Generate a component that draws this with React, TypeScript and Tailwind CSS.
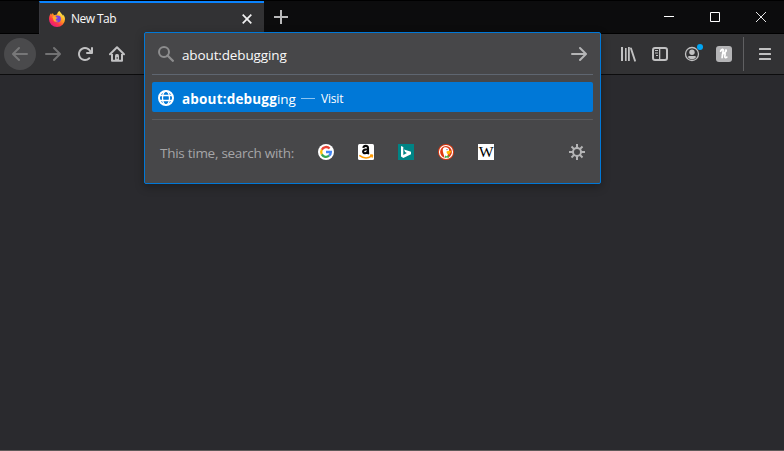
import React from "react";

const ui = "font-['Open_Sans','Noto_Sans',sans-serif]";

function Icon({ children, className = "" }: { children: React.ReactNode; className?: string }) {
  return (
    <svg viewBox="0 0 16 16" className={`block size-4 shrink-0 ${className}`} fill="currentColor">
      {children}
    </svg>
  );
}

const BACK =
  "M15 7H3.414l4.293-4.293a1 1 0 0 0-1.414-1.414l-6 6a1 1 0 0 0 0 1.414l6 6a1 1 0 0 0 1.414-1.414L3.414 9H15a1 1 0 0 0 0-2z";

function Firefox() {
  return (
    <Icon>
      <defs>
        <linearGradient id="fx" x1="0.85" y1="0.1" x2="0.2" y2="0.95">
          <stop offset="0" stopColor="#fff44f" />
          <stop offset="0.4" stopColor="#ff9a1f" />
          <stop offset="0.7" stopColor="#ff3647" />
          <stop offset="1" stopColor="#e31587" />
        </linearGradient>
      </defs>
      <path
        fill="url(#fx)"
        d="M15.4 5.4c-.4-.9-1.100-1.700-1.700-2 .5 1 .7 1.700.8 2.200C13.600 3.300 12 2.400 10.800.4L10.400 0C8.700 1 8.200 2.700 8 3.600c-.8 0-1.500.2-2.100.5-1 .1-1.700-.5-1.900-2.100-.6.3-1 .9-1.300 1.500-.4-.1-.6-.9-.5-1.600C.8 3.200 0 5.500 0 8.200a8 7.800 0 0 0 16 0c0-1-.2-2-.6-2.800z"
      />
      <circle cx="8.500" cy="7.900" r="3.400" fill="#7542e5" />
      <path fill="#ffab2e" d="M3.300 6.100c.9-1.300 2.300-1.500 3.500-.8-.2.900.5 1.400 1.900 1.400-.1.900-1.600.8-1.900 1.500-.1 1.200 1 2 2.400 1.500-1 1.700-3.900 1.200-4.700-.5-.5-1.200-.2-2.200-1.200-3.100z" />
    </Icon>
  );
}

function TabStrip() {
  return (
    <header className="flex h-[34px] border-t border-black bg-[#0c0c0d]">
      <div className="w-[39px] border-b border-black" />
      <div className="flex w-[225px] items-center border-t-2 border-l border-t-[#0a84ff] border-l-[#38383d] bg-[#323234] pl-[9px]">
        <Firefox />
        <span className="ml-[6px] pt-px text-[12px] leading-4 tracking-[-0.55px] text-[#f9f9fa]">New Tab</span>
        <svg viewBox="0 0 10 10" className="mr-[12px] ml-auto size-[10px]" stroke="#f1f1f2" strokeWidth="1.7">
          <path d="M.7.7l8.600 8.600M9.300.7L.7 9.300" />
        </svg>
      </div>
      <div className="flex flex-1 items-center border-b border-black">
        <svg viewBox="0 0 14 14" className="ml-[10px] size-[14px]" stroke="#b9b9ba" strokeWidth="2">
          <path d="M7 0v14M0 7h14" />
        </svg>
        <div className="mr-[18px] ml-auto flex gap-9">
          <svg viewBox="0 0 10 10" className="size-[10px]" stroke="#fff" fill="none">
            <path d="M0 4.500h10" />
          </svg>
          <svg viewBox="0 0 10 10" className="size-[10px]" stroke="#fff" fill="none">
            <path d="M.5.5h9v9h-9z" />
          </svg>
          <svg viewBox="0 0 10 10" className="size-[10px]" stroke="#fff" fill="none" strokeWidth="0.9">
            <path d="M0 0l10 10M10 0L0 10" />
          </svg>
        </div>
      </div>
    </header>
  );
}

function Toolbar() {
  return (
    <nav className="flex h-[41px] items-center border-b border-[#0c0c0d] bg-[#323234] pl-1 text-[#c1c1c2]">
      <div className="flex size-8 items-center justify-center rounded-full bg-[#4a4a4c] text-[#777778]">
        <Icon><path d={BACK} /></Icon>
      </div>
      <Icon className="ml-[9px] -scale-x-100 text-[#727273]"><path d={BACK} /></Icon>
      <Icon className="ml-4">
        <path d="M15 1a1 1 0 0 0-1 1v2.418A6.995 6.995 0 1 0 8 15a6.954 6.954 0 0 0 4.950-2.050 1 1 0 0 0-1.414-1.414A5.019 5.019 0 1 1 12.549 6H10a1 1 0 0 0 0 2h5a1 1 0 0 0 1-1V2a1 1 0 0 0-1-1z" />
      </Icon>
      <Icon className="ml-4">
        <path d="M1 8.200L8 1.300l7 6.900" fill="none" stroke="currentColor" strokeWidth="2" strokeLinecap="round" strokeLinejoin="round" />
        <path d="M3 8v6.800h10V8" fill="none" stroke="currentColor" strokeWidth="2" strokeLinejoin="round" />
        <path d="M6 9.500A1.500 1.500 0 0 1 7.500 8h1A1.500 1.500 0 0 1 10 9.500V15H6z" />
        <path d="M7.700 11h.9v2h-.9z" fill="#323234" />
      </Icon>
      <div className="ml-auto flex items-center">
        <Icon>
          <path d="M1 1h2v14H1zM5 2h1.600v13H5zM8 1h1.800v14H8z" />
          <path d="M11 2.500L15 14.700" stroke="currentColor" strokeWidth="1.900" strokeLinecap="round" />
        </Icon>
        <Icon className="ml-4">
          <rect x="1" y="2" width="14" height="12" rx="2" fill="none" stroke="currentColor" strokeWidth="2" />
          <path d="M7 2h1.300v12H7zM3 4h3v1H3zM3 6.500h3v1H3zM4 9h2v1H4z" />
        </Icon>
        <div className="relative ml-4">
          <Icon>
            <circle cx="8" cy="8" r="6.500" fill="none" stroke="currentColor" strokeWidth="1.300" />
            <circle cx="8" cy="6.300" r="2.700" />
            <path d="M3.700 11c1-1.600 2.300-1 4.300-1s3.300-.6 4.300 1A5.300 5.300 0 0 1 3.700 11z" />
          </Icon>
          <span className="absolute -top-[2px] left-[13px] size-[6px] rounded-full bg-[#00a6f5]" />
        </div>
        <Icon className="ml-4">
          <rect width="16" height="16" rx="3" fill="#b4b4b6" />
          <path d="M4.600 5.200C5.600 3.200 7.500 2.700 7.200 4.400L6.100 11.600M6.400 8.600c1.200-1.700 2.900-1.700 2.700-.4l-.3 2.300c-.1 1.300 1.200 1.400 2 .6" fill="none" stroke="#fff" strokeWidth="1.700" strokeLinecap="round" />
          <path d="M7.300 6.500c1.800.1 3.500-.9 3.200-2.200-.3-.9-1.400-.5-1.300.7l.2 2" fill="none" stroke="#fff" strokeWidth="1.100" strokeLinecap="round" />
        </Icon>
        <div className="ml-[11px] h-[34px] w-px bg-[#606062]" />
        <Icon className="mr-[11px] ml-[13px]">
          <rect x="2" y="2" width="12" height="2" rx=".5" />
          <rect x="2" y="7" width="12" height="2" rx=".5" />
          <rect x="2" y="12" width="12" height="2" rx=".5" />
        </Icon>
      </div>
    </nav>
  );
}

function Engines() {
  return (
    <div className="flex gap-6">
      <Icon>
        <circle cx="8" cy="8" r="8" fill="#fff" />
        <g fill="none" strokeWidth="2.300">
          <path d="M11.600 4.500A4.800 4.800 0 0 0 3.800 5.700" stroke="#ea4335" />
          <path d="M3.800 5.700a4.800 4.800 0 0 0 0 4.700" stroke="#fbbc05" />
          <path d="M3.800 10.400a4.800 4.800 0 0 0 7.300 1.300" stroke="#34a853" />
          <path d="M8 8h4.900a4.800 4.800 0 0 1-1.800 3.700" stroke="#4285f4" />
        </g>
      </Icon>
      <Icon>
        <rect width="16" height="16" rx="1.500" fill="#fff" />
        <path d="M5.300 3.900C5.700 1.300 10 1.100 10 4v4.400c0 .8.4 1.100.9 1.500M9.500 5.200C7 5.200 5.100 5.800 5.100 7.600c0 2.400 3.700 2.100 4.500-.3" fill="none" stroke="#050505" strokeWidth="2.100" />
        <path d="M1.300 11.300c3.900 3 8.500 3.300 12.100.8M12 11.300c1.200-.3 2.500-.3 2.500 0s-.1 1.300-.7 2.200" fill="none" stroke="#f90" strokeWidth="1.500" />
      </Icon>
      <Icon>
        <rect width="16" height="16" fill="#008485" />
        <path d="M3 2l2.300.9v8l3.600-2-1.800-.9-1.100-2.600 7 2.400v2.400L5.300 14 3 12.600z" fill="#fff" />
      </Icon>
      <Icon>
        <circle cx="8" cy="8" r="8" fill="#de3910" />
        <circle cx="8" cy="8" r="6.500" fill="none" stroke="#fff" strokeWidth="1.200" />
        <path d="M6.600 13.800C6 10.500 4.300 7.500 4.800 5.200c.4-1.500 1.700-2.100 3.200-1.900 2.400.2 3.400 1.800 3.100 4.300l-1.600 3.700.4 2.500c-1 .4-2.300.4-3.300 0z" fill="#fff" />
        <path d="M8.500 7.500c1.500-.9 3.800-1 4.700-.3.300 1-.8 1.700-2 2 1 .2 1.300.8.8 1.200-1.700.5-3.700-.6-3.500-2.900z" fill="#fb0" />
        <path d="M7 11.600l1.800.6 2-.9v2.500l-2-.4-1.800.7z" fill="#43b649" />
        <circle cx="9" cy="5.600" r=".6" fill="#2d4f8e" />
      </Icon>
      <div className="flex size-4 items-center justify-center overflow-hidden bg-white font-['Liberation_Serif',serif] text-[15px] leading-4 text-black">
        <span className="scale-x-105">W</span>
      </div>
    </div>
  );
}

function UrlPanel() {
  return (
    <section className="absolute top-[32px] left-[144px] h-[152px] w-[457px] rounded-[2px] border border-[#0078d7] bg-[#474749] px-[7px] shadow-[0_3px_10px_rgba(0,0,0,0.3)]">
      <div className="flex h-[42px] items-center border-b border-[#5f6670] pr-[6px] pl-[6px]">
        <Icon className="text-[#8d8d8e]">
          <circle cx="6" cy="6" r="5" fill="none" stroke="currentColor" strokeWidth="2" />
          <path d="M9.500 9.500l5.300 5.300" stroke="currentColor" strokeWidth="2.300" strokeLinecap="round" />
        </Icon>
        <span className="ml-2 pt-[3px] text-[13.500px] tracking-[-0.130px] text-[#f9f9fa]">about:debugging</span>
        <Icon className="ml-auto -scale-x-100 text-[#b5b5b6]"><path d={BACK} /></Icon>
      </div>
      <div className="mt-[7px] flex h-[30px] items-center rounded-[2px] bg-[#0078d7] pt-[2px] pl-[6px] text-white">
        <Icon>
          <g fill="none" stroke="currentColor" strokeWidth="1.300">
            <circle cx="8" cy="8" r="7" strokeWidth="2" />
            <ellipse cx="8" cy="8" rx="3.500" ry="7" />
            <path d="M1 5.500h14M1 10.500h14" />
          </g>
        </Icon>
        <span className="ml-2 w-[114px] pt-[2px] text-[13.500px] tracking-[-0.130px] whitespace-nowrap">
          <b className="font-bold tracking-[0.180px]">about:debugg</b>ing
        </span>
        <span className="ml-[5px] h-px w-[14px] bg-[#8bc4f2]" />
        <span className="ml-[6px] pt-px text-[12px] tracking-[-0.200px]">Visit</span>
      </div>
      <div className="mt-[7px] h-px bg-[#5b5b5d]" />
      <div className="flex h-[64px] items-center pr-2 pl-2">
        <span className="w-[158px] pt-[2px] text-[13.500px] tracking-[-0.270px] whitespace-nowrap text-[#a5a5a7]">This time, search with:</span>
        <Engines />
        <Icon className="ml-auto text-[#b5b5b6]">
          <g fill="none" stroke="currentColor">
            <circle cx="8" cy="8" r="4" strokeWidth="2" />
            <path d="M8 0v4M8 12v4M0 8h4M12 8h4M2.500 2.500l2.600 2.600M10.900 10.900l2.600 2.600M13.500 2.500l-2.600 2.600M5.100 10.900l-2.600 2.600" strokeWidth="2" />
          </g>
        </Icon>
      </div>
    </section>
  );
}

export default function App() {
  return (
    <div className={`relative flex h-[451px] w-[784px] flex-col overflow-hidden bg-[#2a2a2e] ${ui}`}>
      <TabStrip />
      <Toolbar />
      <main className="flex-1 border-b border-[#5e5959]" />
      <UrlPanel />
    </div>
  );
}
